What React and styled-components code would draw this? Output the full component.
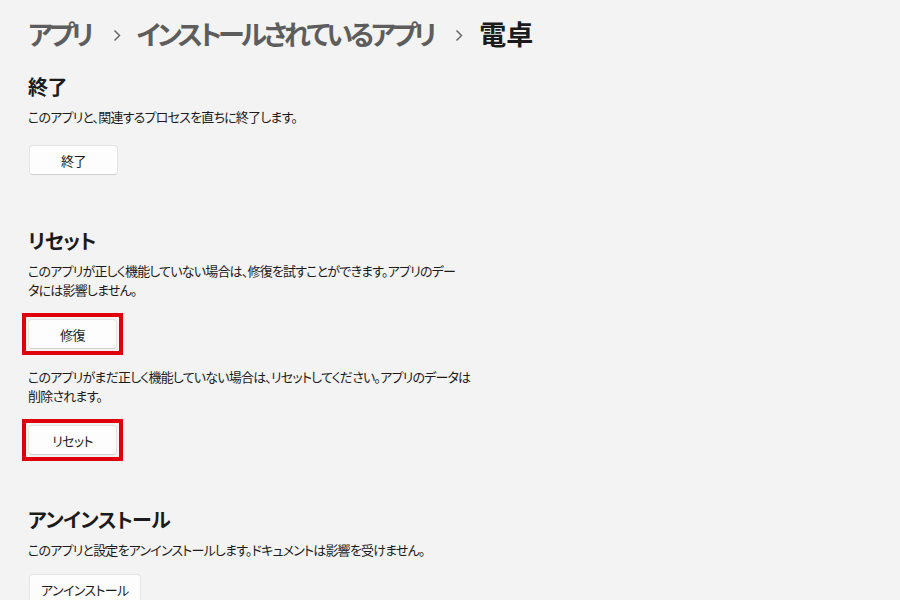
import React from 'react'
import styled, { createGlobalStyle } from 'styled-components';

const GlobalStyle = createGlobalStyle`
  body {
    margin: 0;
    background: #f3f3f3;
    font-family: "Noto Sans CJK JP", "Noto Sans", sans-serif;
    font-feature-settings: "palt";
    color: #1b1b1b;
  }
`;

const sections = [
  {
    title: '終了',
    actions: [
      { text: ['このアプリと、関連するプロセスを直ちに終了します。'], label: '終了' },
    ],
  },
  {
    title: 'リセット',
    actions: [
      {
        text: ['このアプリが正しく機能していない場合は、修復を試すことができます。アプリのデー', 'タには影響しません。'],
        label: '修復',
        marked: true,
      },
      {
        text: ['このアプリがまだ正しく機能していない場合は、リセットしてください。アプリのデータは', '削除されます。'],
        label: 'リセット',
        marked: true,
      },
    ],
  },
  {
    title: 'アンインストール',
    actions: [
      { text: ['このアプリと設定をアンインストールします。ドキュメントは影響を受けません。'], label: 'アンインストール', gap: 15 },
    ],
  },
];

const Chevron = () => (
  <svg width="8" height="13" viewBox="0 0 8 13">
    <path d="M1.5 1.5 L6.5 6.5 L1.5 11.5" fill="none" stroke="#6a6a6a" strokeWidth="1.5" />
  </svg>
);

export default function App() {
  return (
    <Page>
      <GlobalStyle />
      <Breadcrumb>
        <Crumb>アプリ</Crumb>
        <Separator><Chevron /></Separator>
        <Crumb>インストールされているアプリ</Crumb>
        <Separator><Chevron /></Separator>
        <Crumb current>電卓</Crumb>
      </Breadcrumb>
      {sections.map((section) => (
        <Section key={section.title}>
          <Heading>{section.title}</Heading>
          {section.actions.map((action) => (
            <Action key={action.label}>
              <Description gap={action.gap}>
                {action.text.map((line) => (
                  <Line key={line}>{line}</Line>
                ))}
              </Description>
              {action.marked ? (
                <Marker><Button>{action.label}</Button></Marker>
              ) : (
                <Button>{action.label}</Button>
              )}
            </Action>
          ))}
        </Section>
      ))}
    </Page>
  )
}

const Page = styled.div`
  padding: 14px 0 0 28px;
  height: 600px;
  box-sizing: border-box;
  overflow: hidden;
`;

const Breadcrumb = styled.div`
  display: flex;
  align-items: center;
  height: 40px;
  font-size: 27px;
`;

const Crumb = styled.span`
  color: ${props => props.current ? '#1b1b1b' : '#5d5d5d'};
  font-weight: ${props => props.current ? 700 : 600};
  letter-spacing: ${props => props.current ? '0' : '-3.6px'};
  line-height: 40px;
`;

const Separator = styled.span`
  display: flex;
  align-items: center;
  margin: 2px 16px 0 22px;
`;

const Section = styled.section`
  margin-top: 19px;
  & + & {
    margin-top: 52px;
  }
`;

const Heading = styled.h2`
  margin: 0;
  font-size: 20px;
  line-height: 28px;
  font-weight: 700;
  letter-spacing: -0.5px;
`;

const Action = styled.div`
  margin-top: 6px;
  & + & {
    margin-top: 19px;
  }
`;

const Description = styled.p`
  margin: 0 0 ${props => props.gap ?? 19}px;
  font-size: 13px;
  line-height: 19px;
  letter-spacing: -0.8px;
`;

const Line = styled.span`
  display: block;
  white-space: nowrap;
`;

const Marker = styled.div`
  display: inline-block;
  margin: -5px 0 -7px -6px;
  padding: 2px;
  border: 4px solid #e0000b;
  vertical-align: top;
`;

const Button = styled.button`
  display: block;
  min-width: 89px;
  height: 30px;
  margin-left: 1px;
  padding: 0 11px;
  background: #fdfdfd;
  border: 1px solid #e5e5e5;
  border-bottom-color: #cfcfcf;
  border-radius: 4px;
  font-family: inherit;
  font-feature-settings: "palt";
  font-size: 13px;
  letter-spacing: -0.6px;
  color: #1b1b1b;

  ${Marker} & {
    margin-left: 0;
  }
`;
